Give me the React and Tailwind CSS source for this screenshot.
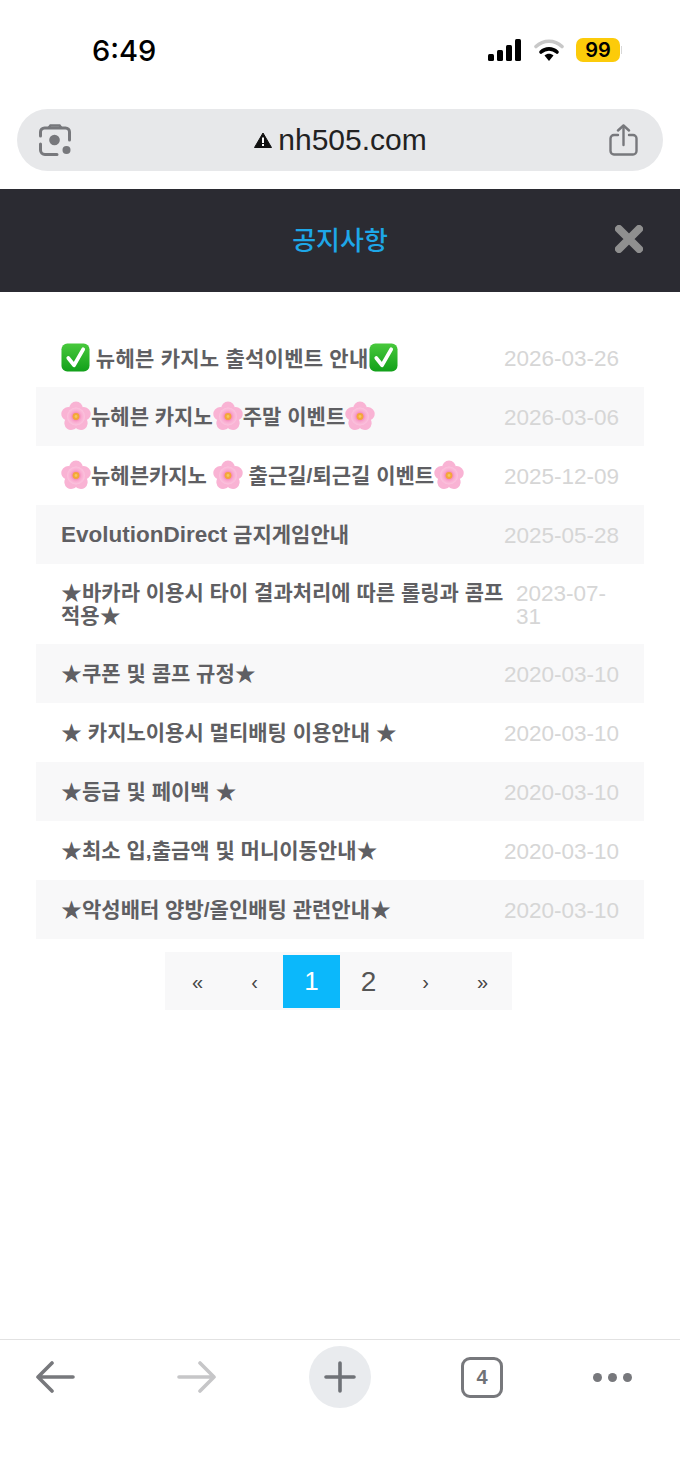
import React from "react";

const Check = () => (
  <svg viewBox="0 0 30 30" className="inline-block w-[29px] h-[29px] align-[-6px]">
    <defs>
      <linearGradient id="checkBg" x1="0" y1="0" x2="0" y2="1">
        <stop offset="0" stopColor="#48c93c" />
        <stop offset="1" stopColor="#12a01a" />
      </linearGradient>
    </defs>
    <rect x="0.5" y="0.5" width="29" height="29" rx="6" fill="url(#checkBg)" />
    <path d="M7.5 15.5l6 7.5L23 6.5" fill="none" stroke="#fff" strokeWidth="3.8" strokeLinecap="round" strokeLinejoin="round" />
  </svg>
);

const Flower = () => (
  <svg viewBox="0 0 30 30" className="inline-block w-[30px] h-[30px] align-[-7px]">
    <defs>
      <radialGradient id="petal" cx="0.5" cy="0.5" r="0.5">
        <stop offset="0.15" stopColor="#f26aa6" />
        <stop offset="0.6" stopColor="#f9a9cf" />
        <stop offset="1" stopColor="#fbc4de" />
      </radialGradient>
    </defs>
    <g fill="#f9b3d4">
      {[0, 72, 144, 216, 288].map((deg) => (
        <ellipse key={deg} cx="15" cy="8" rx="7" ry="7.6" transform={`rotate(${deg} 15 15.5)`} />
      ))}
    </g>
    <circle cx="15" cy="15.5" r="9" fill="url(#petal)" />
    <circle cx="15" cy="15.5" r="3.4" fill="#f4a63a" />
    <circle cx="15" cy="15.5" r="1.4" fill="#f6c95a" />
  </svg>
);

const rows = [
  { title: <><Check /> <span className="tracking-[0.25px]">뉴헤븐 카지노 출석이벤트 안내</span><Check /></>, date: "2026-03-26" },
  { title: <><Flower />뉴헤븐 카지노<Flower />주말 이벤트<Flower /></>, date: "2026-03-06" },
  { title: <><Flower />뉴헤븐카지노 <Flower /> 출근길/퇴근길 이벤트<Flower /></>, date: "2025-12-09" },
  { title: <><span className="text-[22.5px]">EvolutionDirect</span> 금지게임안내</>, date: "2025-05-28" },
  { title: "★바카라 이용시 타이 결과처리에 따른 롤링과 콤프 적용★", date: "2023-07-31", wrap: true },
  { title: "★쿠폰 및 콤프 규정★", date: "2020-03-10" },
  { title: "★ 카지노이용시 멀티배팅 이용안내 ★", date: "2020-03-10" },
  { title: "★등급 및 페이백 ★", date: "2020-03-10" },
  { title: "★최소 입,출금액 및 머니이동안내★", date: "2020-03-10" },
  { title: "★악성배터 양방/올인배팅 관련안내★", date: "2020-03-10" },
];

const pages = [
  { label: "«", small: true },
  { label: "‹", small: true },
  { label: "1", active: true },
  { label: "2" },
  { label: "›", small: true },
  { label: "»", small: true },
];

export default function App() {
  return (
    <div className="w-[680px] h-[1474px] bg-white flex flex-col overflow-hidden font-['Liberation_Sans','Noto_Sans_CJK_KR',sans-serif]">
      {/* status bar */}
      <div className="h-[109px] shrink-0 flex items-start justify-between pt-[34px] pl-[92px] pr-[58px]">
        <span className="text-[29px] leading-[34px] font-medium text-black font-['Inter',sans-serif]">6:49</span>
        <div className="flex items-center gap-[12px] h-[32px]">
          <svg width="34" height="22" viewBox="0 0 34 22">
            <rect x="0" y="15" width="6" height="7" rx="1.5" fill="#000" />
            <rect x="9" y="11" width="6" height="11" rx="1.5" fill="#000" />
            <rect x="18" y="6" width="6" height="16" rx="1.5" fill="#000" />
            <rect x="27" y="0" width="6" height="22" rx="1.5" fill="#000" />
          </svg>
          <svg width="30" height="24" viewBox="0 0 30 24">
            <path d="M2 8.5C9.5 1.5 20.5 1.5 28 8.5" fill="none" stroke="#c8c8c8" strokeWidth="3.6" strokeLinecap="round" />
            <path d="M7 14C11.5 9.8 18.5 9.8 23 14" fill="none" stroke="#000" strokeWidth="3.6" strokeLinecap="round" />
            <path d="M10.5 17.5c2.6-2.3 6.4-2.3 9 0L15 23z" fill="#000" />
          </svg>
          <div className="flex items-center">
            <div className="w-[44px] h-[24px] rounded-[7px] bg-[#fccb0a] flex items-center justify-center text-[20px] font-semibold text-black font-['Inter',sans-serif]">99</div>
            <div className="w-[1px] h-[8px] bg-[#d8d8d8] ml-[1px]" />
          </div>
        </div>
      </div>

      {/* address bar */}
      <div className="h-[80px] shrink-0 px-[17px]">
        <div className="h-[62px] rounded-[31px] bg-[#e7e8ea] flex items-center justify-between pl-[22px] pr-[25px]">
          <svg width="32" height="32" viewBox="0 0 32 32" fill="none" stroke="#77787c" strokeWidth="3" strokeLinecap="round">
            <path d="M1.5 12V8a4 4 0 0 1 4-4h21a4 4 0 0 1 4 4v8" />
            <path d="M1.5 20v6a4.5 4.5 0 0 0 4.5 4.5h12" />
            <path d="M10 3.5l1.5-2h9l1.5 2" strokeWidth="2.6" />
            <circle cx="15.5" cy="16" r="5.3" fill="#77787c" stroke="none" />
            <circle cx="27.5" cy="26" r="4" fill="#77787c" stroke="none" />
          </svg>
          <div className="flex items-center gap-[6px] pl-[1px]">
            <svg width="18" height="16" viewBox="0 0 18 16">
              <path d="M9 1L17.5 15.5H.5z" fill="#111" stroke="#111" strokeLinejoin="round" />
              <rect x="8" y="5.5" width="2" height="5.5" fill="#fff" />
              <rect x="8" y="12" width="2" height="2" fill="#fff" />
            </svg>
            <span className="text-[30px] leading-[34px] text-[#222]">nh505.com</span>
          </div>
          <svg width="29" height="32" viewBox="0 0 29 32" fill="none" stroke="#77787c" strokeWidth="2.4" strokeLinecap="round" strokeLinejoin="round">
            <path d="M9 11H5a3.5 3.5 0 0 0-3.5 3.5V27A3.5 3.5 0 0 0 5 30.5h19a3.5 3.5 0 0 0 3.5-3.5V14.5A3.5 3.5 0 0 0 24 11h-4" />
            <path d="M14.5 21V2" />
            <path d="M9 6.5l5.5-5 5.5 5" />
          </svg>
        </div>
      </div>

      {/* header */}
      <div className="relative h-[103px] shrink-0 bg-[#2b2b32] flex items-center justify-center pt-[2px]">
        <span className="text-[26px] font-medium text-[#1ea7e8]">공지사항</span>
        <svg className="absolute right-[37px] top-[36px]" width="28" height="28" viewBox="0 0 28 28">
          <path d="M4 4l20 20M24 4L4 24" stroke="#8f8f8f" strokeWidth="8" strokeLinecap="round" />
        </svg>
      </div>

      {/* list */}
      <div className="flex-1 px-[36px] pt-[36px] flex flex-col">
        {rows.map((row, i) => (
          <div
            key={row.date + i}
            className={`flex items-center pl-[25px] pr-[25px] pb-[1px] text-[21px] leading-[23px] ${row.wrap ? "h-[80px]" : "h-[59px]"} ${i % 2 === 1 ? "bg-[#f8f8f9]" : "bg-white"}`}
          >
            <div className={`font-semibold text-[#5f5f63] ${row.wrap ? "w-[455px]" : "flex-1"}`}>{row.title}</div>
            <div className={`text-[#d6d6d6] text-[22.5px] pt-[2px] ${row.wrap ? "w-[100px]" : "shrink-0"}`}>{row.date}</div>
          </div>
        ))}

        <div className="flex justify-center mt-[13px] mr-[3px]">
          <div className="flex bg-[#f8f8f9] h-[58px] w-[347px] pl-[4px] pt-[3px]">
            {pages.map((p) => (
              <div
                key={p.label}
                className={`w-[57px] h-[53px] flex items-center justify-center ${p.active ? "bg-[#0bb8fb] text-white text-[26px]" : p.small ? "text-[#444] text-[20px]" : "text-[#555] text-[28px]"}`}
              >
                {p.label}
              </div>
            ))}
          </div>
        </div>
      </div>

      {/* bottom toolbar */}
      <div className="h-[135px] shrink-0 border-t border-[#e2e2e2] grid grid-cols-[110px_174px_112px_172px_89px] items-center content-start pt-[6px]">
        <div className="h-[62px] flex items-center justify-center">
          <svg width="40" height="32" viewBox="0 0 40 32" fill="none" stroke="#77787c" strokeWidth="3.6" strokeLinecap="round" strokeLinejoin="round">
            <path d="M38 16H3M17 2L3 16l14 14" />
          </svg>
        </div>
        <div className="h-[62px] flex items-center justify-center">
          <svg width="40" height="32" viewBox="0 0 40 32" fill="none" stroke="#c6c6c8" strokeWidth="3.6" strokeLinecap="round" strokeLinejoin="round">
            <path d="M2 16h35M23 2l14 14-14 14" />
          </svg>
        </div>
        <div className="flex justify-center">
          <div className="w-[62px] h-[62px] rounded-full bg-[#e9ebee] flex items-center justify-center">
            <svg width="32" height="32" viewBox="0 0 32 32" stroke="#6f7277" strokeWidth="3.6" strokeLinecap="round">
              <path d="M16 2v28M2 16h28" />
            </svg>
          </div>
        </div>
        <div className="h-[62px] flex items-center justify-center">
          <div className="w-[42px] h-[41px] rounded-[9px] border-[3px] border-[#77787c] flex items-center justify-center text-[20px] font-bold text-[#6f7277]">4</div>
        </div>
        <div className="h-[62px] flex items-center justify-center gap-[6px]">
          <span className="w-[9px] h-[9px] rounded-full bg-[#77787c]" />
          <span className="w-[9px] h-[9px] rounded-full bg-[#77787c]" />
          <span className="w-[9px] h-[9px] rounded-full bg-[#77787c]" />
        </div>
      </div>
    </div>
  );
}
